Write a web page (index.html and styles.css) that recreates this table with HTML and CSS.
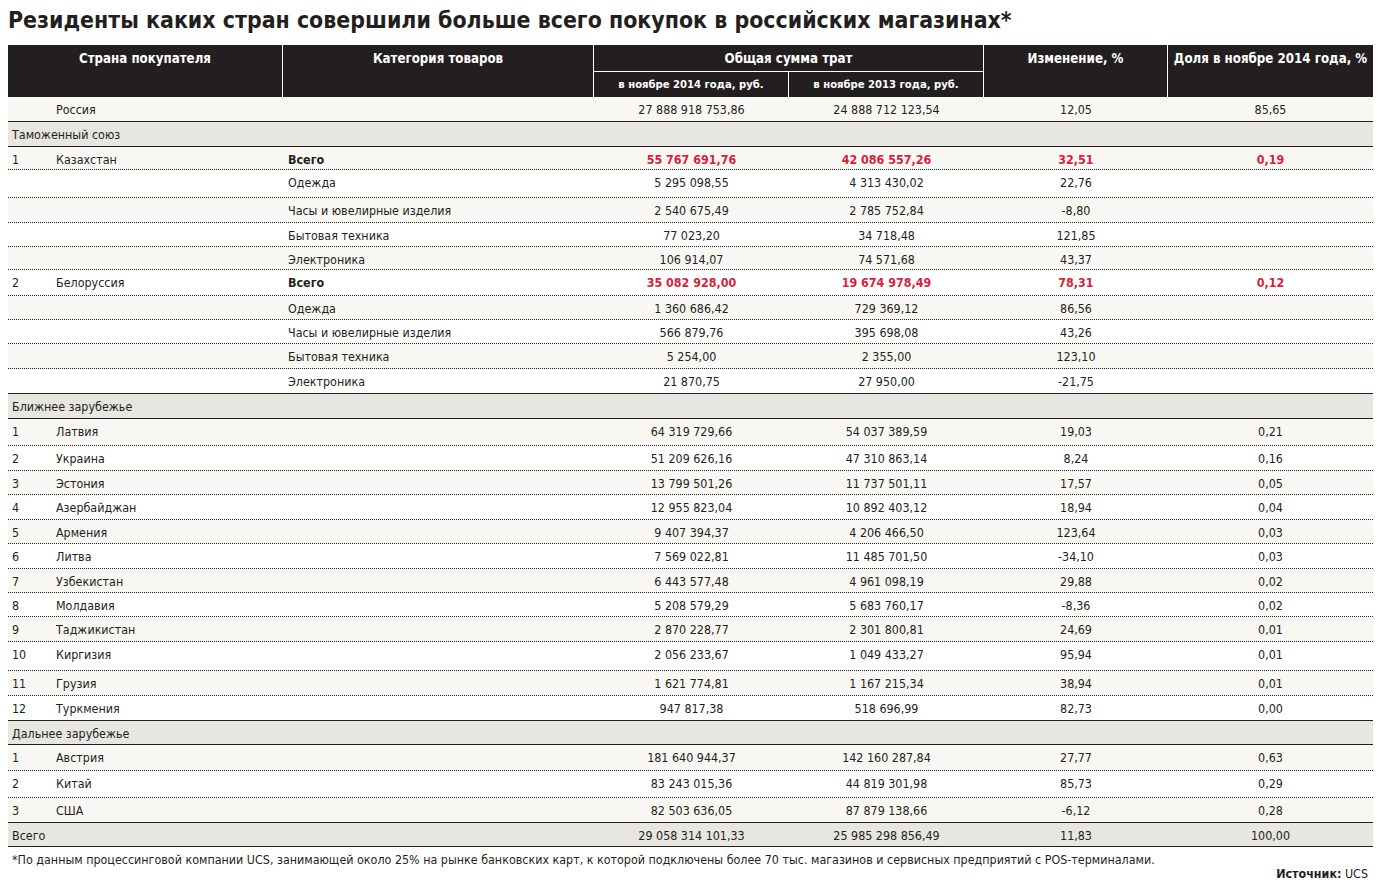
FILE: index.html
```html
<!DOCTYPE html>
<html lang="ru">
<head>
<meta charset="utf-8">
<title>Резиденты каких стран совершили больше всего покупок в российских магазинах</title>
<link rel="stylesheet" href="styles.css">
</head>
<body>
<div class="page">
  <h1 class="title">Резиденты каких стран совершили больше всего покупок в российских магазинах*</h1>

  <div class="table">
    <div class="head">
      <div class="hc h-country">Страна покупателя</div>
      <div class="hc h-cat">Категория товаров</div>
      <div class="hc h-sum">Общая сумма трат</div>
      <div class="hc h-sub h-s1">в ноябре 2014 года, руб.</div>
      <div class="hc h-sub h-s2">в ноябре 2013 года, руб.</div>
      <div class="hc h-chg">Изменение, %</div>
      <div class="hc h-share">Доля в ноябре 2014 года, %</div>
    </div>

    <div class="row light solid h25"><div class="c no"></div><div class="c country">Россия</div><div class="c cat"></div><div class="c num">27 888 918 753,86</div><div class="c num">24 888 712 123,54</div><div class="c num">12,05</div><div class="c num">85,65</div></div>

    <div class="group h25">Таможенный союз</div>

    <div class="row light h23"><div class="c no">1</div><div class="c country">Казахстан</div><div class="c cat b">Всего</div><div class="c num red">55 767 691,76</div><div class="c num red">42 086 557,26</div><div class="c num red">32,51</div><div class="c num red">0,19</div></div>
    <div class="row h28"><div class="c no"></div><div class="c country"></div><div class="c cat">Одежда</div><div class="c num">5 295 098,55</div><div class="c num">4 313 430,02</div><div class="c num">22,76</div><div class="c num"></div></div>
    <div class="row light h25"><div class="c no"></div><div class="c country"></div><div class="c cat">Часы и ювелирные изделия</div><div class="c num">2 540 675,49</div><div class="c num">2 785 752,84</div><div class="c num">-8,80</div><div class="c num"></div></div>
    <div class="row h24"><div class="c no"></div><div class="c country"></div><div class="c cat">Бытовая техника</div><div class="c num">77 023,20</div><div class="c num">34 718,48</div><div class="c num">121,85</div><div class="c num"></div></div>
    <div class="row light h23"><div class="c no"></div><div class="c country"></div><div class="c cat">Электроника</div><div class="c num">106 914,07</div><div class="c num">74 571,68</div><div class="c num">43,37</div><div class="c num"></div></div>
    <div class="row h26"><div class="c no">2</div><div class="c country">Белоруссия</div><div class="c cat b">Всего</div><div class="c num red">35 082 928,00</div><div class="c num red">19 674 978,49</div><div class="c num red">78,31</div><div class="c num red">0,12</div></div>
    <div class="row light h24"><div class="c no"></div><div class="c country"></div><div class="c cat">Одежда</div><div class="c num">1 360 686,42</div><div class="c num">729 369,12</div><div class="c num">86,56</div><div class="c num"></div></div>
    <div class="row h24"><div class="c no"></div><div class="c country"></div><div class="c cat">Часы и ювелирные изделия</div><div class="c num">566 879,76</div><div class="c num">395 698,08</div><div class="c num">43,26</div><div class="c num"></div></div>
    <div class="row light h25"><div class="c no"></div><div class="c country"></div><div class="c cat">Бытовая техника</div><div class="c num">5 254,00</div><div class="c num">2 355,00</div><div class="c num">123,10</div><div class="c num"></div></div>
    <div class="row solid h25"><div class="c no"></div><div class="c country"></div><div class="c cat">Электроника</div><div class="c num">21 870,75</div><div class="c num">27 950,00</div><div class="c num">-21,75</div><div class="c num"></div></div>

    <div class="group h25">Ближнее зарубежье</div>

    <div class="row light h27"><div class="c no">1</div><div class="c country">Латвия</div><div class="c cat"></div><div class="c num">64 319 729,66</div><div class="c num">54 037 389,59</div><div class="c num">19,03</div><div class="c num">0,21</div></div>
    <div class="row h25"><div class="c no">2</div><div class="c country">Украина</div><div class="c cat"></div><div class="c num">51 209 626,16</div><div class="c num">47 310 863,14</div><div class="c num">8,24</div><div class="c num">0,16</div></div>
    <div class="row light h24"><div class="c no">3</div><div class="c country">Эстония</div><div class="c cat"></div><div class="c num">13 799 501,26</div><div class="c num">11 737 501,11</div><div class="c num">17,57</div><div class="c num">0,05</div></div>
    <div class="row h25"><div class="c no">4</div><div class="c country">Азербайджан</div><div class="c cat"></div><div class="c num">12 955 823,04</div><div class="c num">10 892 403,12</div><div class="c num">18,94</div><div class="c num">0,04</div></div>
    <div class="row light h24"><div class="c no">5</div><div class="c country">Армения</div><div class="c cat"></div><div class="c num">9 407 394,37</div><div class="c num">4 206 466,50</div><div class="c num">123,64</div><div class="c num">0,03</div></div>
    <div class="row h25"><div class="c no">6</div><div class="c country">Литва</div><div class="c cat"></div><div class="c num">7 569 022,81</div><div class="c num">11 485 701,50</div><div class="c num">-34,10</div><div class="c num">0,03</div></div>
    <div class="row light h24"><div class="c no">7</div><div class="c country">Узбекистан</div><div class="c cat"></div><div class="c num">6 443 577,48</div><div class="c num">4 961 098,19</div><div class="c num">29,88</div><div class="c num">0,02</div></div>
    <div class="row h24"><div class="c no">8</div><div class="c country">Молдавия</div><div class="c cat"></div><div class="c num">5 208 579,29</div><div class="c num">5 683 760,17</div><div class="c num">-8,36</div><div class="c num">0,02</div></div>
    <div class="row light h25"><div class="c no">9</div><div class="c country">Таджикистан</div><div class="c cat"></div><div class="c num">2 870 228,77</div><div class="c num">2 301 800,81</div><div class="c num">24,69</div><div class="c num">0,01</div></div>
    <div class="row h29"><div class="c no">10</div><div class="c country">Киргизия</div><div class="c cat"></div><div class="c num">2 056 233,67</div><div class="c num">1 049 433,27</div><div class="c num">95,94</div><div class="c num">0,01</div></div>
    <div class="row light h25"><div class="c no">11</div><div class="c country">Грузия</div><div class="c cat"></div><div class="c num">1 621 774,81</div><div class="c num">1 167 215,34</div><div class="c num">38,94</div><div class="c num">0,01</div></div>
    <div class="row solid h25"><div class="c no">12</div><div class="c country">Туркмения</div><div class="c cat"></div><div class="c num">947 817,38</div><div class="c num">518 696,99</div><div class="c num">82,73</div><div class="c num">0,00</div></div>

    <div class="group h24">Дальнее зарубежье</div>

    <div class="row light h26"><div class="c no">1</div><div class="c country">Австрия</div><div class="c cat"></div><div class="c num">181 640 944,37</div><div class="c num">142 160 287,84</div><div class="c num">27,77</div><div class="c num">0,63</div></div>
    <div class="row h27"><div class="c no">2</div><div class="c country">Китай</div><div class="c cat"></div><div class="c num">83 243 015,36</div><div class="c num">44 819 301,98</div><div class="c num">85,73</div><div class="c num">0,29</div></div>
    <div class="row light solid h25"><div class="c no">3</div><div class="c country">США</div><div class="c cat"></div><div class="c num">82 503 636,05</div><div class="c num">87 879 138,66</div><div class="c num">-6,12</div><div class="c num">0,28</div></div>

    <div class="row total solid h24"><div class="c label">Всего</div><div class="c num">29 058 314 101,33</div><div class="c num">25 985 298 856,49</div><div class="c num">11,83</div><div class="c num">100,00</div></div>
  </div>

  <p class="note">*По данным процессинговой компании UCS, занимающей около 25% на рынке банковских карт, к которой подключены более 70 тыс. магазинов и сервисных предприятий с POS-терминалами.</p>
  <p class="source"><b>Источник:</b> UCS</p>
</div>
</body>
</html>
```

FILE: styles.css
```css
html, body {
  margin: 0;
  padding: 0;
  background: #ffffff;
}

body {
  font-family: "DejaVu Sans Condensed", "DejaVu Sans", sans-serif;
  font-stretch: condensed;
  color: #231f20;
  font-size: 12.4px;
}

.page {
  width: 1379px;
  padding: 0 6px 0 8px;
  box-sizing: border-box;
}

.title {
  margin: 0;
  height: 45px;
  box-sizing: border-box;
  padding-top: 7px;
  font-size: 22.9px;
  line-height: 26px;
  font-weight: bold;
  white-space: nowrap;
}

.table {
  width: 1365px;
}

/* header */
.head {
  display: grid;
  grid-template-columns: 274px 310px 194px 194px 183px 205px;
  grid-template-rows: 26px 25px;
  gap: 1px;
  background: #ffffff;
}

.hc {
  background: #231f20;
  color: #ffffff;
  font-weight: bold;
  font-size: 13.2px;
  line-height: 16px;
  text-align: center;
  padding-top: 6px;
  box-sizing: border-box;
  white-space: nowrap;
}

.h-country { grid-column: 1; grid-row: 1 / 3; }
.h-cat { grid-column: 2; grid-row: 1 / 3; }
.h-sum { grid-column: 3 / 5; grid-row: 1; }
.h-s1 { grid-column: 3; grid-row: 2; }
.h-s2 { grid-column: 4; grid-row: 2; }
.h-chg { grid-column: 5; grid-row: 1 / 3; }
.h-share { grid-column: 6; grid-row: 1 / 3; }

.h-sub {
  font-size: 11.2px;
  padding-top: 5px;
}

/* body rows */
.row {
  display: grid;
  grid-template-columns: 44px 231px 311px 195px 195px 184px 205px;
  box-sizing: border-box;
  border-bottom: 1px dotted #231f20;
  background: #ffffff;
}

.row.light { background: #f8f7f3; }
.row.solid { border-bottom: 1px solid #231f20; }

.row.total {
  grid-template-columns: 586px 195px 195px 184px 205px;
  background: #e7e6e1;
}

.c {
  padding-top: 5px;
  line-height: 16px;
  white-space: nowrap;
}

.no { padding-left: 4px; }
.country { padding-left: 4px; }
.cat { padding-left: 5px; }
.label { padding-left: 4px; }
.num { text-align: center; }

.b { font-weight: bold; }
.red { color: #d61f3c; font-weight: bold; }

.group {
  box-sizing: border-box;
  background: #e7e6e1;
  border-bottom: 1px solid #231f20;
  padding: 5px 0 0 4px;
  line-height: 16px;
}

.h23 { height: 23px; }
.h24 { height: 24px; }
.h25 { height: 25px; }
.h26 { height: 26px; }
.h27 { height: 27px; }
.h28 { height: 28px; }
.h29 { height: 29px; }

.note {
  margin: 5px 0 0 4px;
  line-height: 16px;
  font-size: 12.4px;
}

.source {
  margin: 0 5px 0 0;
  text-align: right;
  line-height: 12px;
  font-size: 12.4px;
}

.source b { font-weight: bold; }
```
